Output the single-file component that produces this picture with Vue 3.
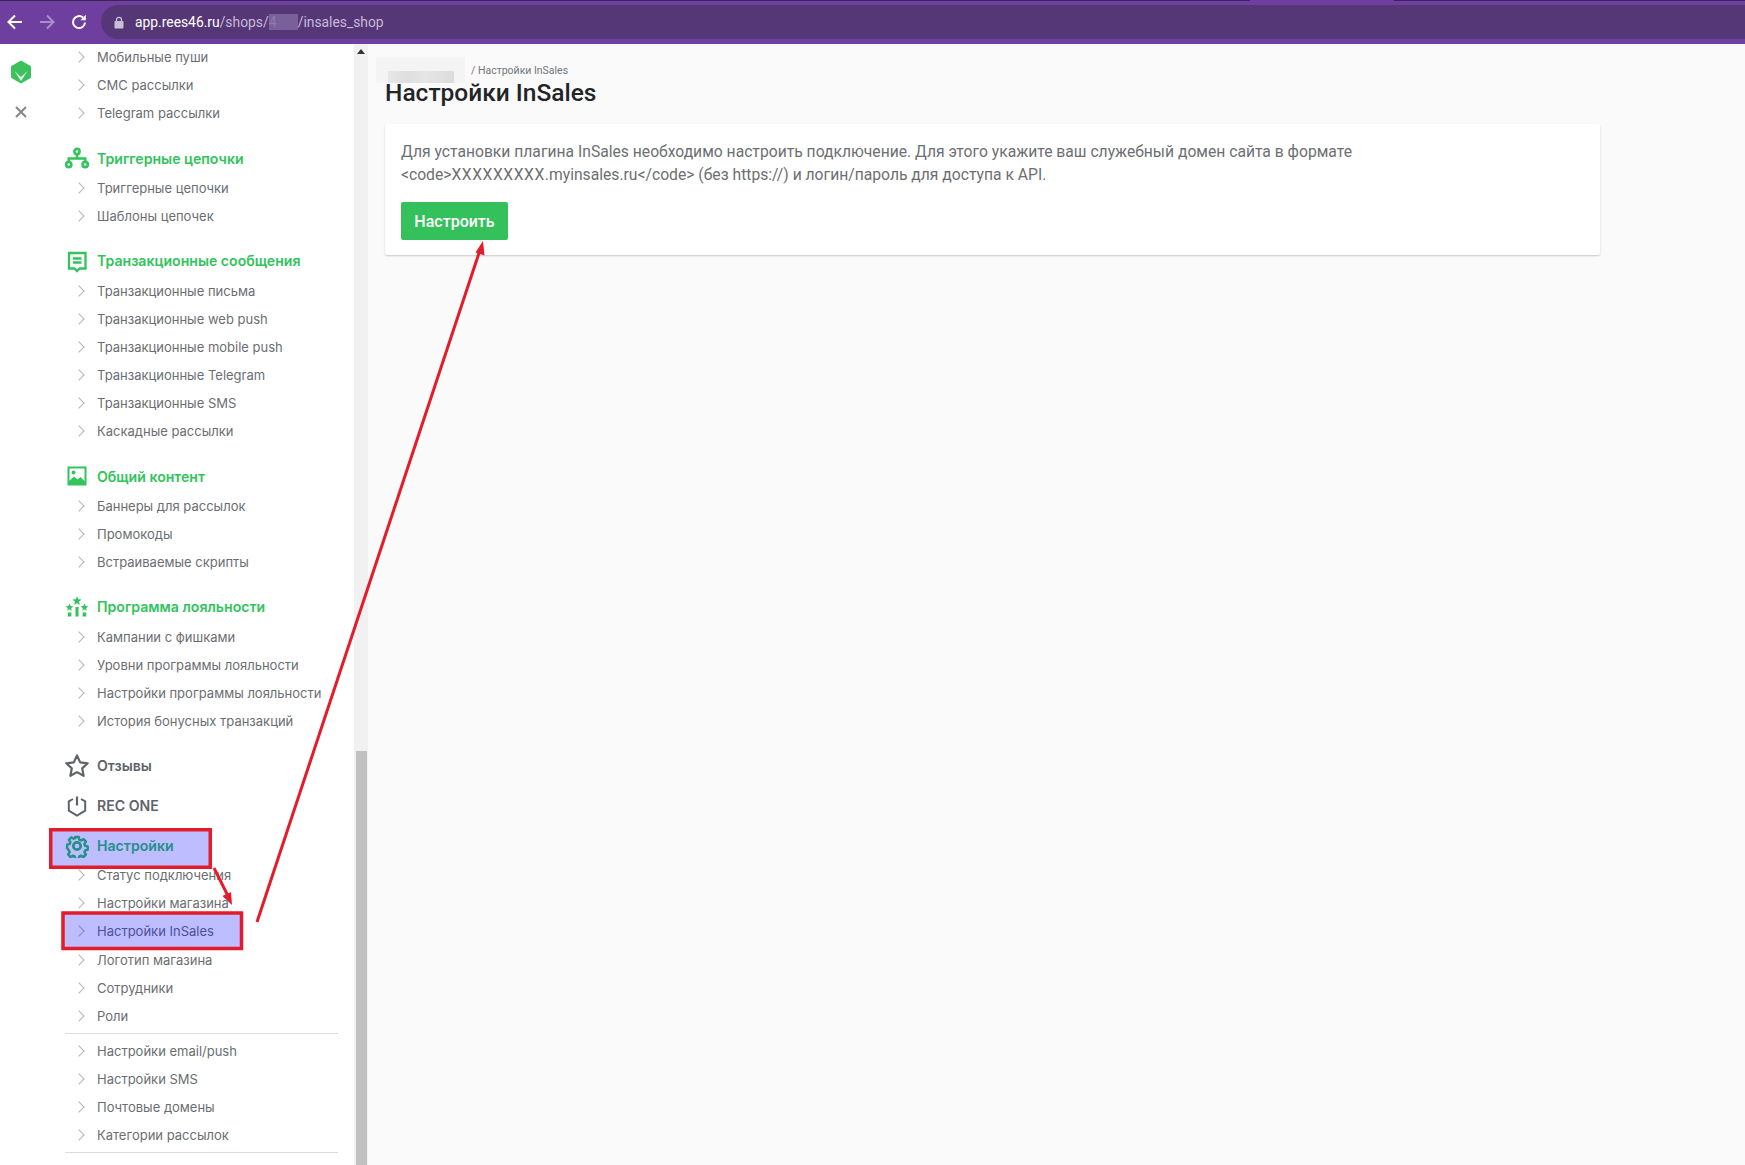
<script setup>
const groups = [
  { items: ['Мобильные пуши', 'СМС рассылки', 'Telegram рассылки'], first: true },
  { title: 'Триггерные цепочки', icon: 'tree', items: ['Триггерные цепочки', 'Шаблоны цепочек'] },
  { title: 'Транзакционные сообщения', icon: 'msg', items: ['Транзакционные письма', 'Транзакционные web push', 'Транзакционные mobile push', 'Транзакционные Telegram', 'Транзакционные SMS', 'Каскадные рассылки'] },
  { title: 'Общий контент', icon: 'img', items: ['Баннеры для рассылок', 'Промокоды', 'Встраиваемые скрипты'] },
  { title: 'Программа лояльности', icon: 'stars', items: ['Кампании с фишками', 'Уровни программы лояльности', 'Настройки программы лояльности', 'История бонусных транзакций'] }
]
const settingsA = ['Статус подключения', 'Настройки магазина', 'Настройки InSales', 'Логотип магазина', 'Сотрудники', 'Роли']
const settingsB = ['Настройки email/push', 'Настройки SMS', 'Почтовые домены', 'Категории рассылок']
function star(cx, cy, R) {
  const pts = []
  for (let i = 0; i < 10; i++) {
    const r = i % 2 ? R * 0.45 : R
    const a = -Math.PI / 2 + (i * Math.PI) / 5
    pts.push((cx + r * Math.cos(a)).toFixed(2) + ',' + (cy + r * Math.sin(a)).toFixed(2))
  }
  return pts.join(' ')
}
</script>

<template>
  <div class="page">
    <header class="browser">
      <div class="strip"><i class="dark a"></i><i class="light"></i><i class="dark b"></i></div>
      <div class="toolbar">
        <div class="nav">
          <svg width="18" height="18" viewBox="0 0 18 18" fill="none" stroke="#fff" stroke-width="2"><path d="M16 9H2.500M9 2.500 2.500 9 9 15.500"/></svg>
          <svg width="18" height="18" viewBox="0 0 18 18" fill="none" stroke="#a98fc8" stroke-width="2"><path d="M2 9h13.500M9 2.500 15.500 9 9 15.500"/></svg>
          <svg width="18" height="18" viewBox="0 0 18 18" fill="none" stroke="#fff" stroke-width="2"><path d="M15 9.500A6 6 0 1 1 13 4.600"/><path d="M15.800 1.800v5.400h-5.400z" fill="#fff" stroke="none"/></svg>
        </div>
        <div class="omnibox">
          <svg width="10" height="13" viewBox="0 0 10 13"><path d="M2.500 5.500V3.800a2.500 2.500 0 0 1 5 0v1.700" fill="none" stroke="#c9bdd8" stroke-width="1.300"/><rect x="0.500" y="5" width="9" height="7.500" rx="1" fill="#c9bdd8"/></svg>
          <span class="url"><b>app.rees46.ru</b>/shops/<span class="blurred">4</span>/insales_shop</span>
        </div>
      </div>
    </header>

    <div class="body">
      <aside class="sidebar">
        <div class="rail">
          <svg class="logo" width="22" height="24" viewBox="0 0 22 24">
            <path d="M11 0.500 21 6.200v11.600L11 23.500 1 17.800V6.200z" fill="#3cc15c"/>
            <path d="M4.500 11 11 17l6.500-6L11 21z" fill="#e8f8ec"/>
          </svg>
          <svg class="close" width="12" height="12" viewBox="0 0 12 12" stroke="#7f8891" stroke-width="2"><path d="M1 1l10 10M11 1 1 11"/></svg>
        </div>

        <nav class="menu">
          <section v-for="g in groups" :key="g.items[0]" :class="{ group: !g.first }">
            <h3 v-if="g.title" class="head green">
              <span class="ico">
                <svg v-if="g.icon === 'tree'" width="24" height="24" viewBox="0 0 24 24" fill="none" stroke="#31c45c" stroke-width="2.600">
                  <circle cx="12" cy="5.500" r="2.600"/><circle cx="3.800" cy="18.500" r="2.600"/><circle cx="20.200" cy="18.500" r="2.600"/>
                  <path d="M12 8v4.500M3.800 16v-3.500h16.400V16"/>
                </svg>
                <svg v-else-if="g.icon === 'msg'" width="24" height="24" viewBox="0 0 24 24" fill="none" stroke="#31c45c" stroke-width="2.300">
                  <path d="M4 4h16.500v15.500H14.500L12 22l-2.500-2.500H4z"/><path d="M8 9.500h8.500M8 13.500h8.500"/>
                </svg>
                <svg v-else-if="g.icon === 'img'" width="24" height="24" viewBox="0 0 24 24">
                  <rect x="3.500" y="3.500" width="17" height="17" fill="#fff" stroke="#31c45c" stroke-width="2"/>
                  <circle cx="8.500" cy="8.500" r="1.900" fill="#31c45c"/>
                  <path d="M3.500 20.500v-3l5.500-5 3.500 3 3-2.500 4.500 4.500v3z" fill="#31c45c"/>
                </svg>
                <svg v-else width="24" height="24" viewBox="0 0 24 24" fill="#31c45c">
                  <polygon :points="star(12, 6, 4.800)"/>
                  <polygon :points="star(4.500, 12.500, 4)"/>
                  <polygon :points="star(19.500, 12.500, 4)"/>
                  <rect x="10.500" y="12" width="3" height="9.500"/><rect x="2.800" y="17.500" width="3.600" height="4"/><rect x="17.600" y="17.500" width="3.600" height="4"/>
                </svg>
              </span>
              {{ g.title }}
            </h3>
            <a v-for="it in g.items" :key="it" class="item"><span class="chev"></span>{{ it }}</a>
          </section>

          <h3 class="head standalone">
            <span class="ico"><svg width="26" height="26" viewBox="0 0 26 26" fill="none" stroke="#5e646a" stroke-width="2.200" stroke-linejoin="round"><path d="m13 2.500 3.200 6.900 7.500.900-5.500 5.100 1.400 7.400L13 19.100l-6.600 3.700 1.400-7.400-5.500-5.100 7.500-.900z"/></svg></span>
            Отзывы
          </h3>
          <h3 class="head single">
            <span class="ico"><svg width="24" height="24" viewBox="0 0 24 24" fill="none" stroke="#5e646a" stroke-width="2"><path d="M8 5 3.800 7.400v9.200L12 21.500l8.200-4.900V7.400L16 5"/><path d="M12 2.500v9" stroke-width="2.200"/></svg></span>
            REC ONE
          </h3>
          <h3 class="head single green settings">
            <span class="ico"><svg width="24" height="24" viewBox="0 0 24 24" fill="none" stroke="#31c45c" stroke-width="2.700" stroke-linejoin="round"><circle cx="12" cy="12" r="3.700"/><path d="M10 2h4l.600 3 2 .900 2.600-1.600 2.700 2.900-1.700 2.500.800 2 2.900.700v3.800l-2.900.700-.800 2 1.700 2.500-2.700 2.900-2.600-1.600-2 .900-.600 2.700h-4l-.600-2.700-2-.900-2.600 1.600-2.700-2.900 1.700-2.500-.800-2L1 14.200v-3.800l2.900-.700.800-2L3 5.200l2.700-2.900 2.600 1.600 2-.900z" transform="translate(1.200 1.200) scale(.9)"/></svg></span>
            Настройки
          </h3>
          <a v-for="it in settingsA" :key="it" class="item"><span class="chev"></span>{{ it }}</a>
          <hr />
          <a v-for="it in settingsB" :key="it" class="item"><span class="chev"></span>{{ it }}</a>
          <hr />
        </nav>

        <div class="scrollbar">
          <span class="up"></span>
          <span class="thumb"></span>
        </div>
      </aside>

      <main class="main">
        <div class="crumbs">
          <span class="redacted"><i></i></span>
          <span class="crumb-text">/ Настройки InSales</span>
        </div>
        <h1>Настройки InSales</h1>
        <div class="card">
          <p>Для установки плагина InSales необходимо настроить подключение. Для этого укажите ваш служебный домен сайта в формате<br />&lt;code&gt;<span class="xs">XXXXXXXXX</span>.myinsales.ru&lt;/code&gt; (без https://) и логин/пароль для доступа к API.</p>
          <button>Настроить</button>
        </div>
      </main>
    </div>

    <svg class="notes" width="1745" height="1165" viewBox="0 0 1745 1165" fill="none">
      <rect x="50.750" y="829.750" width="159.500" height="37.500" fill="#0000ff" fill-opacity=".26" stroke="#e31b2a" stroke-width="3.500"/>
      <rect x="63" y="913" width="178.500" height="35.500" fill="#0000ff" fill-opacity=".26" stroke="#e31b2a" stroke-width="3.500"/>
      <path d="M214 868 229 898" stroke="#e31b2a" stroke-width="3"/>
      <path d="m232 905-9.500-9 8.500-4z" fill="#e31b2a"/>
      <path d="M257 922 480 250" stroke="#e31b2a" stroke-width="3"/>
      <path d="m483 241 1.500 14.500-9-3z" fill="#e31b2a"/>
    </svg>
  </div>
</template>

<style>
html, body { margin: 0; background: #fafafa; overflow: hidden; }
</style>

<style scoped>
.page { position: relative; width: 1745px; height: 1165px; overflow: hidden; display: flex; flex-direction: column; font-family: Inter, "Noto Sans", sans-serif; }

.browser { height: 44px; background: #6f3fa0; flex: none; }
.strip { height: 1px; display: flex; }
.strip .dark { background: #3a2458; }
.strip .a { width: 1250px; }
.strip .light { width: 144px; }
.strip .b { flex: 1; }
.toolbar { height: 34px; margin-top: 4px; display: flex; align-items: center; }
.nav { width: 101px; display: flex; align-items: center; gap: 14px; padding-left: 6px; box-sizing: border-box; flex: none; }
.omnibox { flex: 1; height: 34px; background: #553778; border-radius: 17px 0 0 17px; display: flex; align-items: center; gap: 11px; padding-left: 13px; }
.url { font: 13.850px Roboto, sans-serif; color: #c8bad9; }
.url b { color: #fff; font-weight: 400; }
.blurred { display: inline-block; width: 29px; background: #79609a; color: #8f7aab; line-height: 1.2; }

.body { flex: 1; display: flex; min-height: 0; }
.sidebar { width: 368px; flex: none; background: #fff; display: flex; overflow: hidden; }
.rail { width: 65px; flex: none; display: flex; flex-direction: column; align-items: center; padding-right: 23px; box-sizing: border-box; }
.logo { margin-top: 16px; }
.close { margin-top: 22px; }
.menu { width: 273px; flex: none; margin-top: -.9px; }
.group { margin-top: 15.100px; }
.head { height: 32px; margin: 0; display: flex; align-items: center; font-size: 14.100px; font-weight: 600; color: #5e646a; }
.group > .head { height: 31.400px; }
.head.standalone { margin-top: 14.800px; }
.head.single { margin-top: 8px; }
.head.settings { height: 31.400px; }
.head.green { color: #31c45c; }
.ico { width: 32px; height: 26px; display: flex; align-items: center; justify-content: center; margin: 0 4px 0 -4px; flex: none; }
.item { height: 28.120px; display: flex; align-items: center; font-size: 13px; color: #6a6e73; white-space: nowrap; padding-left: 12px; }
.chev { width: 7px; height: 7px; border-top: 1.500px solid #b4b6b8; border-right: 1.500px solid #b4b6b8; transform: rotate(45deg); margin-right: 14px; margin-left: -2px; flex: none; }
hr { border: 0; height: 1px; background: #dcdcdc; margin: 3px 0; }

.scrollbar { width: 14px; margin-left: 16px; flex: none; background: #f1f1f1; position: relative; }
.up { display: block; width: 0; height: 0; margin: 5px auto 0; border: 4px solid transparent; border-top: 0; border-bottom: 5px solid #333; }
.thumb { position: absolute; left: 2px; right: 1px; bottom: 0; top: 707px; background: #c1c1c1; }

.main { flex: 1; background: #fafafa; padding: 12px 145px 0 17px; box-sizing: border-box; min-width: 0; }
.crumbs { height: 23px; display: flex; align-items: flex-start; gap: 6px; font: 10.500px/14px Roboto, sans-serif; color: #70767c; margin-left: -9px; }
.crumb-text { margin-top: 8px; }
.redacted { width: 89px; height: 26px; margin-top: 1px; background: #f4f4f4; position: relative; display: block; flex: none; }
.redacted i { position: absolute; left: 12px; top: 14px; width: 66px; height: 12px; background: linear-gradient(90deg, #e8e8e8, #dedede 30%, #e6e6e6 55%, #dcdcdc); }
h1 { margin: -3.500px 0 14.500px; font: 500 24.500px/34px Roboto, sans-serif; color: #1f2529; position: relative; }
.card { height: 131px; background: #fff; border-radius: 2px; box-shadow: 0 1px 2px rgba(0,0,0,.2); padding: 16px; box-sizing: border-box; }
p { margin: 0 0 16px; font: 15.680px/23px Roboto, sans-serif; color: #6c6f72; }
.xs { letter-spacing: .55px; }
button { display: block; width: 107px; height: 38px; border: 0; border-radius: 2px; background: #34c15b; color: #fff; font: 500 16px Roboto, sans-serif; padding: 0; }

.notes { position: absolute; inset: 0; pointer-events: none; }
</style>
